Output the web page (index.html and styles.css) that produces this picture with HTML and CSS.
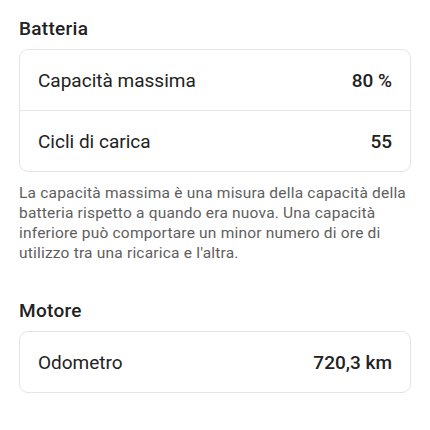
FILE: index.html
```html
<!DOCTYPE html>
<html lang="it">
<head>
    <meta charset="UTF-8">
    <meta name="viewport" content="width=device-width, initial-scale=1.0">
    <title>Batteria e motore</title>
    <link rel="stylesheet" href="styles.css">
</head>
<body>
    <div class="page">
        <h2 class="section-title">Batteria</h2>
        <div class="card">
            <div class="row">
                <span class="label">Capacità massima</span>
                <span class="value">80 %</span>
            </div>
            <div class="row">
                <span class="label">Cicli di carica</span>
                <span class="value">55</span>
            </div>
        </div>
        <p class="note">La capacità massima è una misura della capacità della batteria rispetto a quando era nuova. Una capacità inferiore può comportare un minor numero di ore di utilizzo tra una ricarica e l'altra.</p>

        <h2 class="section-title section-title-next">Motore</h2>
        <div class="card">
            <div class="row">
                <span class="label">Odometro</span>
                <span class="value">720,3 km</span>
            </div>
        </div>
    </div>
</body>
</html>
```

FILE: styles.css
```css
body {
    margin: 0;
    background-color: #fff;
    font-family: Roboto, "Noto Sans", sans-serif;
    color: #1c1c1c;
}

.page {
    padding: 17px 19px 0 19px;
}

.section-title {
    margin: 0 0 8px;
    font-size: 19px;
    font-weight: 500;
    line-height: 24px;
    letter-spacing: 0.3px;
    color: #222;
}

.section-title-next {
    margin-top: 36px;
}

.card {
    border: 1px solid #e4e4e4;
    border-radius: 9px;
    background-color: #fff;
}

.row {
    display: flex;
    justify-content: space-between;
    align-items: center;
    height: 60px;
    padding: 0 18px;
}

.row + .row {
    border-top: 1px solid #e8e8e8;
}

.label {
    font-size: 19px;
    color: #222;
}

.value {
    font-size: 19px;
    font-weight: 500;
    color: #222;
}

.note {
    margin: 11px 0 0;
    font-size: 15.5px;
    line-height: 20px;
    letter-spacing: 0.2px;
    color: #5e5e5e;
}
```
